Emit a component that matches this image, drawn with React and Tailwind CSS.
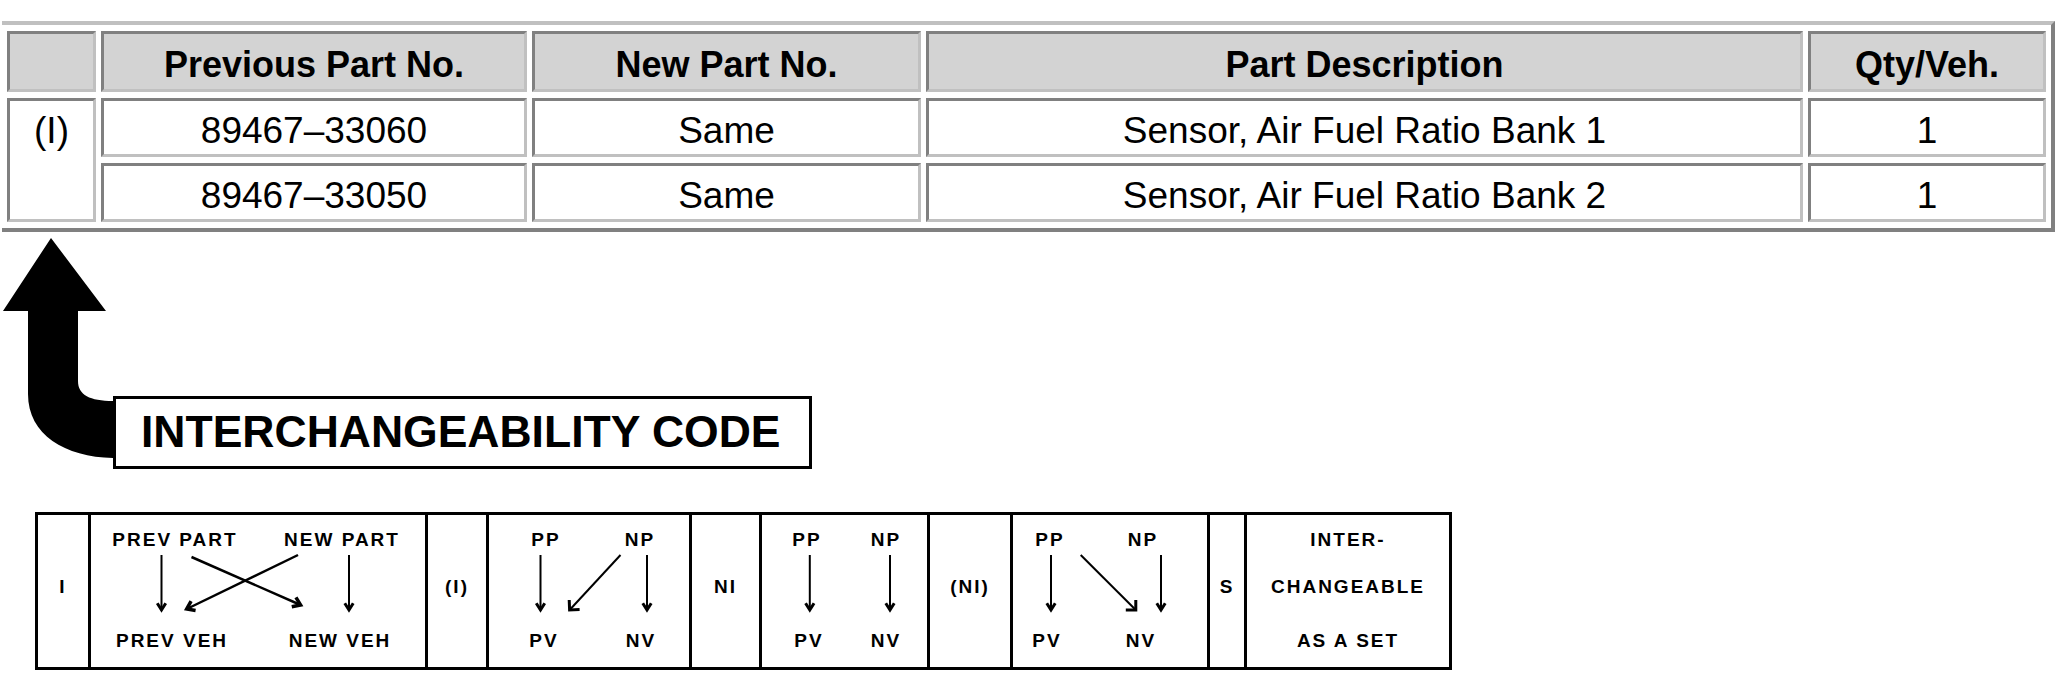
import React from 'react';

const cell =
  'border-[3px] border-t-[#808080] border-l-[#808080] border-b-[#c0c0c0] border-r-[#c0c0c0] p-0 text-center';
const head = `${cell} bg-[#d3d3d3] h-[61px] pt-[7px] text-[36px] font-bold leading-[48px]`;
const body = `${cell} bg-white h-[59px] pt-[6px] text-[37px] leading-[47px]`;

const rows = [
  { prev: '89467–33060', next: 'Same', desc: 'Sensor, Air Fuel Ratio Bank 1', qty: '1' },
  { prev: '89467–33050', next: 'Same', desc: 'Sensor, Air Fuel Ratio Bank 2', qty: '1' },
];

// line with an open arrow head at (x2, y2)
const Arrow = ({ x1, y1, x2, y2, size = 9, spread = 35, w = 2 }) => {
  const a = Math.atan2(y2 - y1, x2 - x1);
  const s = (spread * Math.PI) / 180;
  const p1 = [x2 - size * Math.cos(a - s), y2 - size * Math.sin(a - s)];
  const p2 = [x2 - size * Math.cos(a + s), y2 - size * Math.sin(a + s)];
  return (
    <g stroke="#000" fill="none" strokeWidth={w}>
      <line x1={x1} y1={y1} x2={x2} y2={y2} />
      <polyline points={`${p1[0]},${p1[1]} ${x2},${y2} ${p2[0]},${p2[1]}`} strokeWidth={w + 1} />
    </g>
  );
};

const Down = ({ x }) => <Arrow x1={x} y1={7} x2={x} y2={62} size={8} spread={32} />;

const Lbl = ({ className, children }) => (
  <span className={`text-center whitespace-nowrap ${className}`}>{children}</span>
);

const Single = ({ className, children }) => (
  <div className={`flex items-center justify-center pb-[9px] ${className}`}>{children}</div>
);

const Diagram = ({ className, top, bottom, width, children }) => (
  <div className={`flex flex-col pt-[17px] pb-[18px] ${className}`}>
    <div className="flex h-[16px]">{top}</div>
    <svg width={width} height="85" viewBox={`0 0 ${width} 85`} className="block">
      {children}
    </svg>
    <div className="flex h-[16px]">{bottom}</div>
  </div>
);

export default function App() {
  return (
    <div className="w-[2068px] h-[680px] bg-white overflow-hidden text-black font-['Liberation_Sans',Arial,sans-serif]">
      <table className="mt-[21px] ml-[2px] w-[2053px] table-fixed border-separate border-spacing-x-[5px] border-spacing-y-[6px] border-t-[4px] border-r-[4px] border-b-[4px] border-t-[#c0c0c0] border-r-[#808080] border-b-[#808080]">
        <thead>
          <tr>
            <th className={`${head} w-[89px]`}></th>
            <th className={`${head} w-[426px]`}>Previous Part No.</th>
            <th className={`${head} w-[389px]`}>New Part No.</th>
            <th className={`${head} w-[877px]`}>Part Description</th>
            <th className={`${head} w-[238px]`}>Qty/Veh.</th>
          </tr>
        </thead>
        <tbody>
          {rows.map((r, i) => (
            <tr key={r.prev}>
              {i === 0 && (
                <td rowSpan={2} className={`${cell} bg-white pt-[6px] text-[37px] leading-[47px] align-top`}>
                  (I)
                </td>
              )}
              <td className={body}>{r.prev}</td>
              <td className={body}>{r.next}</td>
              <td className={body}>{r.desc}</td>
              <td className={body}>{r.qty}</td>
            </tr>
          ))}
        </tbody>
      </table>

      <div className="flex items-start mt-[3px]">
        <svg width="113" height="233" viewBox="0 0 113 233" className="block shrink-0">
          <path
            d="M51 3 L106 76 L78 76 L78 146 C78 160 90 166 113 166 L113 223 C65 222 28 200 28 159 L28 76 L3 76 Z"
            fill="#000"
          />
        </svg>
        <div className="mt-[161px] w-[699px] h-[73px] border-[3px] border-black flex items-center pl-[25px] text-[44.5px] font-bold leading-none">
          INTERCHANGEABILITY CODE
        </div>
      </div>

      <div className="ml-[35px] mt-[43px] flex w-[1417px] h-[158px] border-[3px] border-black divide-x-[3px] divide-black text-[19px] leading-[16px] font-bold tracking-[2px]">
        <Single className="w-[53px]">I</Single>

        <Diagram
          className="w-[337px]"
          width={334}
          top={
            <>
              <Lbl className="w-[140px] ml-[14px]">PREV PART</Lbl>
              <Lbl className="w-[140px] ml-[27px]">NEW PART</Lbl>
            </>
          }
          bottom={
            <>
              <Lbl className="w-[140px] ml-[11px]">PREV VEH</Lbl>
              <Lbl className="w-[140px] ml-[28px]">NEW VEH</Lbl>
            </>
          }
        >
          <Down x={70.5} />
          <Down x={258} />
          <Arrow x1={100.5} y1={9} x2={209.6} y2={57} w={2.5} />
          <Arrow x1={207} y1={7} x2={95.7} y2={61} w={2.5} />
        </Diagram>

        <Single className="w-[61px]">(I)</Single>

        <Diagram
          className="w-[203px]"
          width={200}
          top={
            <>
              <Lbl className="w-[50px] ml-[32px]">PP</Lbl>
              <Lbl className="w-[50px] ml-[44px]">NP</Lbl>
            </>
          }
          bottom={
            <>
              <Lbl className="w-[50px] ml-[30px]">PV</Lbl>
              <Lbl className="w-[50px] ml-[47px]">NV</Lbl>
            </>
          }
        >
          <Down x={51.5} />
          <Down x={158} />
          <Arrow x1={131.5} y1={7} x2={80.6} y2={62} size={10} spread={45} />
        </Diagram>

        <Single className="w-[70px]">NI</Single>

        <Diagram
          className="w-[168px]"
          width={165}
          top={
            <>
              <Lbl className="w-[50px] ml-[20px]">PP</Lbl>
              <Lbl className="w-[50px] ml-[29px]">NP</Lbl>
            </>
          }
          bottom={
            <>
              <Lbl className="w-[50px] ml-[22px]">PV</Lbl>
              <Lbl className="w-[50px] ml-[27px]">NV</Lbl>
            </>
          }
        >
          <Down x={47.8} />
          <Down x={128} />
        </Diagram>

        <Single className="w-[83px]">(NI)</Single>

        <Diagram
          className="w-[197px]"
          width={194}
          top={
            <>
              <Lbl className="w-[50px] ml-[12px]">PP</Lbl>
              <Lbl className="w-[50px] ml-[43px]">NP</Lbl>
            </>
          }
          bottom={
            <>
              <Lbl className="w-[50px] ml-[9px]">PV</Lbl>
              <Lbl className="w-[50px] ml-[44px]">NV</Lbl>
            </>
          }
        >
          <Down x={38} />
          <Down x={148} />
          <Arrow x1={67.7} y1={7} x2={122.8} y2={62} size={10} spread={45} />
        </Diagram>

        <Single className="w-[37px]">S</Single>

        <div className="w-[202px] flex flex-col items-center pt-[17px]">
          <span>INTER-</span>
          <span className="mt-[31px]">CHANGEABLE</span>
          <span className="mt-[38px]">AS A SET</span>
        </div>
      </div>
    </div>
  );
}
